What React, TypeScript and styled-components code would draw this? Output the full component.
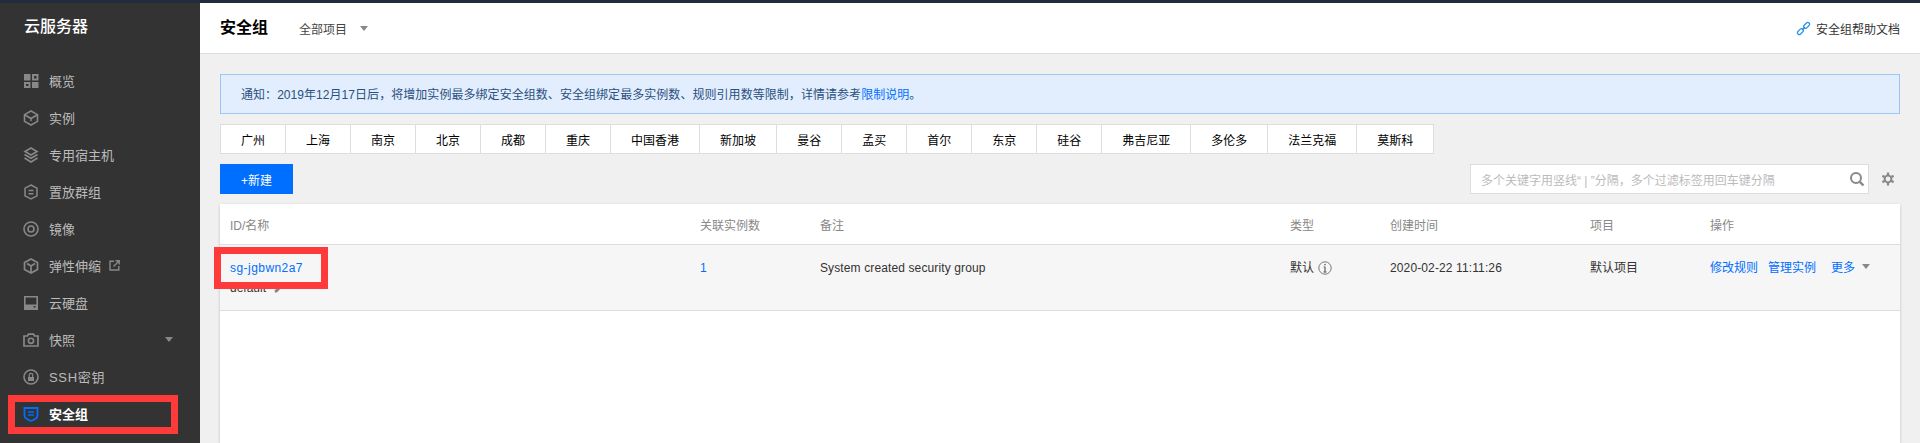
import React from 'react';
import styled, { createGlobalStyle } from 'styled-components';

const FONT = '"Liberation Sans", "Noto Sans CJK SC", sans-serif';

const Global = createGlobalStyle`
  html, body { margin: 0; padding: 0; height: 100%; overflow: hidden; }
  body { font-family: ${FONT}; font-size: 12px; color: #333; }
  * { box-sizing: border-box; }
`;

const Page = styled.div`
  width: 1920px; height: 443px; display: flex; flex-direction: column; overflow: hidden; background: #f0f0f0;
`;
const TopStrip = styled.div`height: 3px; background: #232c3d; flex: none;`;
const Body = styled.div`flex: 1; display: flex; min-height: 0;`;

const Sidebar = styled.aside`width: 200px; flex: none; background: #333;`;
const Brand = styled.div`
  height: 59px; padding: 13px 0 0 24px; font-size: 16px; line-height: 22px; color: #fff; font-weight: 500;
`;
const Nav = styled.nav`display: flex; flex-direction: column;`;
const NavItem = styled.div<{ $active?: boolean }>`
  position: relative; height: 37px; display: flex; align-items: center; padding-left: 23px;
  font-size: 13px; color: ${p => (p.$active ? '#fff' : '#bbb')}; font-weight: ${p => (p.$active ? 700 : 400)};
`;
const NavIcon = styled.svg<{ $active?: boolean }>`
  width: 16px; height: 16px; flex: none; margin-right: 10px; color: ${p => (p.$active ? '#006eff' : '#888')};
`;
const NavLabel = styled.span<{ $wide?: boolean }>`letter-spacing: ${p => (p.$wide ? '0.7px' : '0')};`;
const External = styled.svg`width: 11px; height: 11px; margin-left: 8px; color: #888;`;
const NavCaret = styled.i`
  position: absolute; left: 165px; top: 16px; width: 0; height: 0;
  border-left: 4px solid transparent; border-right: 4px solid transparent; border-top: 5px solid #888;
`;
const SideFrame = styled.div`
  position: absolute; left: 8px; top: 0; width: 170px; height: 39px; border: 7px solid #ff3a3a; pointer-events: none;
`;

const Main = styled.main`flex: 1; min-width: 0; display: flex; flex-direction: column;`;
const Header = styled.header`
  height: 51px; flex: none; background: #fff; border-bottom: 1px solid #ddd; display: flex; align-items: center; padding: 0 20px;
`;
const Title = styled.h1`margin: 0; font-size: 16px; line-height: 22px; font-weight: 700; color: #000;`;
const ProjectPick = styled.div`margin-left: 31px; display: flex; align-items: center; color: #444;`;
const Caret = styled.i<{ $ml?: number; $raised?: boolean }>`
  display: inline-block; width: 0; height: 0; margin-left: ${p => p.$ml ?? 13}px;
  margin-bottom: ${p => (p.$raised ? '3px' : '0')};
  border-left: 4px solid transparent; border-right: 4px solid transparent; border-top: 5px solid #888;
`;
const HelpLink = styled.div`margin-left: auto; display: flex; align-items: center; color: #333;`;
const LinkIcon = styled.svg`width: 15px; height: 15px; margin-right: 5px; color: #2a8fe8;`;

const Content = styled.div`flex: 1; min-height: 0; padding: 20px 20px 0; display: flex; flex-direction: column;`;
const Notice = styled.div`
  height: 40px; flex: none; background: #e2eefd; border: 1px solid #9cc6f8; padding: 0 0 2px 20px;
  display: flex; align-items: center; color: #2a5080; letter-spacing: 0.05px;
`;
const NoticeLink = styled.span`color: #006eff;`;
const Tabs = styled.div`
  margin-top: 10px; height: 30px; flex: none; display: flex; align-self: flex-start; background: #fff; border: 1px solid #ddd;
`;
const Tab = styled.div`
  padding: 0 20px; display: flex; align-items: center; color: #000; border-left: 1px solid #ddd; height: 100%;
  &:first-child { border-left: 0; }
`;
const Toolbar = styled.div`margin-top: 10px; height: 30px; flex: none; display: flex; align-items: center;`;
const AddButton = styled.button`
  width: 73px; height: 30px; border: 0; padding: 0; background: #006eff; color: #fff; font: inherit; font-size: 12px;
`;
const Search = styled.div`
  margin-left: auto; width: 399px; height: 30px; background: #fff; border: 1px solid #ddd; padding: 0 3px 0 10px;
  display: flex; align-items: center; justify-content: space-between; color: #bbb;
`;
const SearchIcon = styled.svg`width: 16px; height: 16px; color: #888;`;
const Gear = styled.svg`width: 14px; height: 14px; margin: 0 5px 0 12px; color: #888;`;

const Table = styled.div`
  margin-top: 10px; flex: 1; background: #fff; box-shadow: 0 1px 3px rgba(0,0,0,.2);
`;
const Grid = styled.div`
  display: grid; grid-template-columns: 470px 120px 470px 100px 200px 120px 200px;
`;
const HeadRow = styled(Grid)`height: 41px; border-bottom: 1px solid #ddd; align-items: center; color: #888;`;
const DataRow = styled(Grid)`
  position: relative; height: 66px; background: #f6f6f6; border-bottom: 1px solid #ddd; padding-top: 14px;
`;
const HeadCell = styled.div`padding-left: 10px;`;
const Cell = styled.div<{ $spaced?: boolean }>`
  padding-left: 10px; line-height: 18px; color: #333; letter-spacing: ${p => (p.$spaced ? '0.12px' : '0')};
`;
const Link = styled.span<{ $id?: boolean }>`color: #006eff; letter-spacing: ${p => (p.$id ? '0.45px' : '0')};`;
const NameLine = styled.div`margin-top: 2px; display: flex; align-items: center; color: #333;`;
const Pen = styled.svg`width: 10px; height: 10px; margin-left: 8px; color: #888;`;
const InfoIcon = styled.svg`width: 14px; height: 14px; margin-left: 4px; vertical-align: -3px; color: #777;`;
const Ops = styled.div`display: flex; align-items: center; color: #006eff;`;
const Op = styled.span<{ $ml?: number }>`margin-left: ${p => p.$ml ?? 0}px;`;
const IdFrame = styled.div`
  position: absolute; left: -6px; top: 2px; width: 114px; height: 42px; border: 7px solid #ff3a3a; pointer-events: none;
`;

const Svg = (C: typeof NavIcon, d: React.ReactNode, active?: boolean) => (
  <C viewBox="0 0 16 16" fill="none" $active={active}>{d}</C>
);

const icons: Record<string, React.ReactNode> = {
  grid: (
    <path fill="currentColor" fillRule="evenodd" d="M1 1h6.5v6.5H1zM9 1h6.5v6.5H9zM11 3v2.5h2.5V3zM1 9h6.5v6H1zM3 11v2h2.5v-2zM9 9h6.5v6H9z" />
  ),
  box: (
    <g stroke="currentColor" strokeWidth="1.6">
      <path d="M8 1L14.5 4.6V11.4L8 15L1.5 11.4V4.6Z" />
      <path d="M2 5L8 8.5L14 5M8 8.5V11" />
    </g>
  ),
  layers: (
    <g stroke="currentColor" strokeWidth="1.6">
      <path d="M8 1L14 4.5L8 8L2 4.5Z" />
      <path d="M1.5 7.5L8 11.3L14.5 7.5" />
      <path d="M1.5 11L8 15L14.5 11" />
    </g>
  ),
  hex: (
    <g stroke="currentColor" strokeWidth="1.5">
      <path d="M8 1L14 4.2V11.8L8 15L2 11.8V4.2Z" />
      <path d="M5.5 6.5H10.5M5.5 9.8H10.5" />
    </g>
  ),
  disc: (
    <g stroke="currentColor" strokeWidth="1.6">
      <circle cx="8" cy="8" r="7" />
      <circle cx="8" cy="8" r="3" />
    </g>
  ),
  cube: (
    <g stroke="currentColor" strokeWidth="1.7">
      <path d="M8 1L14.5 4.6V11.4L8 15L1.5 11.4V4.6Z" />
      <path d="M4 5.5L8 8L12 5.5M8 8V14" />
    </g>
  ),
  drive: (
    <g>
      <path stroke="currentColor" strokeWidth="1.6" d="M1.8 1.8H14.2V14.2H1.8Z" />
      <path fill="currentColor" d="M2 9.5H14V14H2z" />
      <path fill="#333" d="M10.5 11h2v1.5h-2z" />
    </g>
  ),
  camera: (
    <g>
      <path stroke="currentColor" strokeWidth="1.7" d="M1 4H4.5L5.5 2.2H10.5L11.5 4H15V14H1Z" />
      <circle cx="8" cy="8.8" r="2.6" stroke="currentColor" strokeWidth="1.6" />
    </g>
  ),
  key: (
    <g>
      <circle cx="8" cy="8" r="7" stroke="currentColor" strokeWidth="1.6" />
      <path fill="currentColor" d="M5 8h6v4H5z" />
      <path stroke="currentColor" strokeWidth="1.2" d="M6.3 8V6a1.7 1.7 0 013.4 0v2" />
    </g>
  ),
  shield: (
    <g>
      <path stroke="currentColor" strokeWidth="1.8" d="M1.5 2H14.5V9.5C14.5 12 11 14 8 15C5 14 1.5 12 1.5 9.5Z" />
      <path stroke="currentColor" strokeWidth="1.5" d="M5 6H11M5 9H11" />
    </g>
  ),
};

const regions = ['广州','上海','南京','北京','成都','重庆','中国香港','新加坡','曼谷','孟买','首尔','东京','硅谷','弗吉尼亚','多伦多','法兰克福','莫斯科'];

export default function App() {
  return (
    <Page>
      <Global />
      <TopStrip />
      <Body>
        <Sidebar>
          <Brand>云服务器</Brand>
          <Nav>
            <NavItem>{Svg(NavIcon, icons.grid)}<NavLabel>概览</NavLabel></NavItem>
            <NavItem>{Svg(NavIcon, icons.box)}<NavLabel>实例</NavLabel></NavItem>
            <NavItem>{Svg(NavIcon, icons.layers)}<NavLabel>专用宿主机</NavLabel></NavItem>
            <NavItem>{Svg(NavIcon, icons.hex)}<NavLabel>置放群组</NavLabel></NavItem>
            <NavItem>{Svg(NavIcon, icons.disc)}<NavLabel>镜像</NavLabel></NavItem>
            <NavItem>
              {Svg(NavIcon, icons.cube)}<NavLabel>弹性伸缩</NavLabel>
              <External viewBox="0 0 11 11" fill="none">
                <path stroke="currentColor" strokeWidth="1.4" d="M5 1.2H1V10H9.8V6M4.5 6.5L10 1M6.5 .8H10.2V4.5" />
              </External>
            </NavItem>
            <NavItem>{Svg(NavIcon, icons.drive)}<NavLabel>云硬盘</NavLabel></NavItem>
            <NavItem>{Svg(NavIcon, icons.camera)}<NavLabel>快照</NavLabel><NavCaret /></NavItem>
            <NavItem>{Svg(NavIcon, icons.key)}<NavLabel $wide>SSH密钥</NavLabel></NavItem>
            <NavItem $active>{Svg(NavIcon, icons.shield, true)}<NavLabel>安全组</NavLabel><SideFrame /></NavItem>
          </Nav>
        </Sidebar>
        <Main>
          <Header>
            <Title>安全组</Title>
            <ProjectPick>全部项目<Caret /></ProjectPick>
            <HelpLink>
              <LinkIcon viewBox="0 0 15 15" fill="none">
                <g stroke="currentColor" strokeWidth="1.2">
                  <rect x="-3.4" y="-1.8" width="6.8" height="3.6" rx="1.8" transform="translate(4.4 10.6) rotate(-45)" />
                  <rect x="-3.4" y="-1.8" width="6.8" height="3.6" rx="1.8" transform="translate(10.6 4.4) rotate(-45)" />
                  <path d="M6 9L9 6" />
                </g>
              </LinkIcon>
              安全组帮助文档
            </HelpLink>
          </Header>
          <Content>
            <Notice>
              <span>通知：2019年12月17日后，将增加实例最多绑定安全组数、安全组绑定最多实例数、规则引用数等限制，详情请参考<NoticeLink>限制说明</NoticeLink>。</span>
            </Notice>
            <Tabs>{regions.map(r => <Tab key={r}>{r}</Tab>)}</Tabs>
            <Toolbar>
              <AddButton>+新建</AddButton>
              <Search>
                <span>多个关键字用竖线“ | ”分隔，多个过滤标签用回车键分隔</span>
                <SearchIcon viewBox="0 0 16 16" fill="none">
                  <circle cx="7" cy="7" r="5" stroke="currentColor" strokeWidth="2" />
                  <path stroke="currentColor" strokeWidth="2.4" d="M10.8 10.8L14.5 14.5" />
                </SearchIcon>
              </Search>
              <Gear viewBox="0 0 14 14" fill="none">
                <circle cx="7" cy="7" r="3.4" stroke="currentColor" strokeWidth="2" />
                <path stroke="currentColor" strokeWidth="2.2" d="M7 .5V3M7 11V13.5M1.4 3.8L3.5 5M10.5 9L12.6 10.2M1.4 10.2L3.5 9M10.5 5L12.6 3.8" />
              </Gear>
            </Toolbar>
            <Table>
              <HeadRow>
                <HeadCell>ID/名称</HeadCell>
                <HeadCell>关联实例数</HeadCell>
                <HeadCell>备注</HeadCell>
                <HeadCell>类型</HeadCell>
                <HeadCell>创建时间</HeadCell>
                <HeadCell>项目</HeadCell>
                <HeadCell>操作</HeadCell>
              </HeadRow>
              <DataRow>
                <Cell>
                  <Link $id>sg-jgbwn2a7</Link>
                  <NameLine>
                    default
                    <Pen viewBox="0 0 10 10"><path fill="currentColor" d="M7 1L9 3L3 9.5H.8V7.2Z" /></Pen>
                  </NameLine>
                </Cell>
                <Cell><Link>1</Link></Cell>
                <Cell $spaced>System created security group</Cell>
                <Cell>
                  默认
                  <InfoIcon viewBox="0 0 14 14" fill="none">
                    <circle cx="7" cy="7" r="6.2" stroke="currentColor" />
                    <path stroke="currentColor" strokeWidth="1.4" d="M7 5.8V11M5.6 11H8.4M5.8 6H7" />
                    <circle cx="7" cy="3.6" r=".9" fill="currentColor" />
                  </InfoIcon>
                </Cell>
                <Cell $spaced>2020-02-22 11:11:26</Cell>
                <Cell>默认项目</Cell>
                <Cell>
                  <Ops>
                    <Op>修改规则</Op>
                    <Op $ml={10}>管理实例</Op>
                    <Op $ml={15}>更多</Op>
                    <Caret $ml={7} $raised />
                  </Ops>
                </Cell>
                <IdFrame />
              </DataRow>
            </Table>
          </Content>
        </Main>
      </Body>
    </Page>
  );
}
